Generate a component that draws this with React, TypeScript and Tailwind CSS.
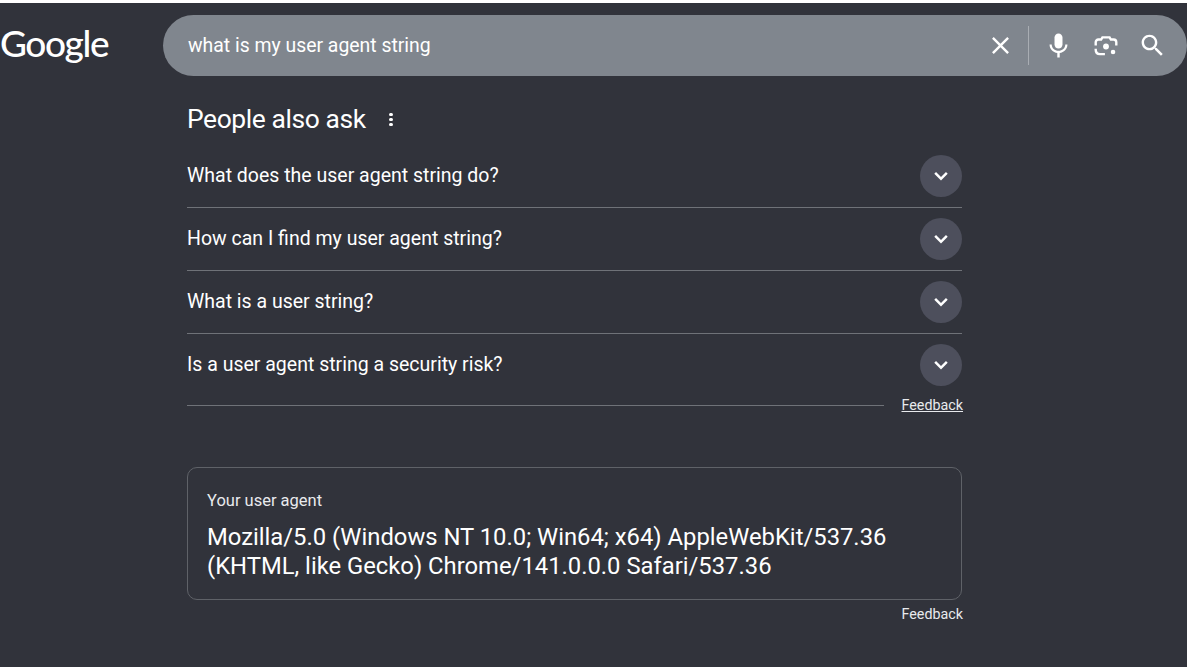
import React from "react";

const questions = [
  "What does the user agent string do?",
  "How can I find my user agent string?",
  "What is a user string?",
  "Is a user agent string a security risk?",
];

function CloseIcon() {
  return (
    <svg viewBox="0 0 24 24" className="w-[29px] h-[29px]" fill="white">
      <path d="M19 6.410 17.590 5 12 10.590 6.410 5 5 6.410 10.590 12 5 17.590 6.410 19 12 13.410 17.590 19 19 17.590 13.410 12z" />
    </svg>
  );
}

function MicIcon() {
  return (
    <svg viewBox="0 0 24 24" className="w-[29px] h-[29px]" fill="white">
      <path d="M12 14.500c1.900 0 3.300-1.500 3.300-3.400V5.400C15.300 3.500 13.900 2 12 2S8.700 3.500 8.700 5.400v5.700c0 1.900 1.400 3.400 3.300 3.400z" />
      <path d="M17.600 11.100c0 3.100-2.500 5.200-5.600 5.200s-5.600-2.100-5.600-5.200H4.600c0 3.700 2.900 6.600 6.400 7.100V22h2v-3.800c3.500-.5 6.400-3.400 6.400-7.100h-1.800z" />
    </svg>
  );
}

function LensIcon() {
  return (
    <svg viewBox="0 0 24 24" className="w-[26px] h-[26px]" fill="none" stroke="white" strokeWidth="2.2">
      <path d="M2.500 11.500V8.500C2.500 7 3.500 6 5 6h2.500l1.200-2h6.600l1.200 2H19c1.500 0 2.500 1 2.500 2.500v3" />
      <path d="M2.500 14.500v1C2.500 18 4 19.500 6.500 19.500H11" />
      <circle cx="12" cy="12.500" r="2.700" fill="white" stroke="none" />
      <circle cx="18.500" cy="17.500" r="2.100" fill="white" stroke="none" />
    </svg>
  );
}

function SearchIcon() {
  return (
    <svg viewBox="0 0 24 24" className="w-[29px] h-[29px]" fill="white">
      <path d="M15.500 14h-.79l-.28-.27C15.410 12.590 16 11.110 16 9.500 16 5.910 13.090 3 9.500 3S3 5.910 3 9.500 5.910 16 9.500 16c1.610 0 3.090-.59 4.230-1.570l.27.28v.79l5 4.990L20.490 19l-4.990-5zm-6 0C7.010 14 5 11.990 5 9.500S7.010 5 9.500 5 14 7.010 14 9.500 11.990 14 9.500 14z" />
    </svg>
  );
}

function ExpandIcon() {
  return (
    <svg viewBox="0 0 24 24" className="w-[26px] h-[26px]" fill="white">
      <path d="M16.590 8.300 12 12.880 7.410 8.300 5.800 9.900l6.200 6.200 6.200-6.200z" />
    </svg>
  );
}

export default function App() {
  return (
    <div className="w-[1187px] h-[667px] overflow-hidden bg-[#31333b] border-t-[3px] border-white font-['Roboto',sans-serif] text-white">
      {/* header */}
      <div className="flex items-center pt-3">
        <div className="w-[163px] pb-[6px] text-[37px] leading-[44px] tracking-[-1.4px] font-['Lato',sans-serif] font-medium">
          Google
        </div>
        <div className="flex-1 h-[61px] rounded-[31px] bg-[#80868e] flex items-center pl-[25px] pr-[20px]">
          <div className="flex-1 text-[19.4px]">what is my user agent string</div>
          <CloseIcon />
          <div className="w-px h-[39px] bg-[#a9adb3] ml-[13px] mr-[15px]" />
          <MicIcon />
          <div className="w-[20px]" />
          <LensIcon />
          <div className="w-[19px]" />
          <SearchIcon />
        </div>
      </div>

      {/* people also ask */}
      <div className="ml-[187px] w-[775px]">
        <div className="flex items-center h-[33px] mt-[27px] mb-[9px]">
          <span className="text-[26.4px] tracking-[-0.4px]">People also ask</span>
          <span className="ml-[23px] flex flex-col gap-[2px]">
            <span className="w-[4px] h-[3px] rounded-full bg-white" />
            <span className="w-[4px] h-[3px] rounded-full bg-white" />
            <span className="w-[4px] h-[3px] rounded-full bg-white" />
          </span>
        </div>
        {questions.map((q, i) => (
          <div
            key={q}
            className={`flex items-center justify-between h-[63px] text-[19.5px] ${
              i < questions.length - 1 ? "border-b border-[#6f7278]" : "pb-[1px]"
            }`}
          >
            <span>{q}</span>
            <div className="w-[42px] h-[42px] rounded-full bg-[#4d4f5c] flex items-center justify-center">
              <ExpandIcon />
            </div>
          </div>
        ))}
        <div className="flex items-center h-[18px] -mt-[1px]">
          <div className="flex-1 h-px bg-[#6f7278] mr-[17px]" />
          <a className="mt-[2px] -mr-[1px] text-[14.3px] underline text-[#e8eaed]">Feedback</a>
        </div>

        {/* user agent card */}
        <div className="mt-[53px] h-[133px] border border-[#5f6268] rounded-[10px] px-[19px] pt-[23px]">
          <div className="text-[16.5px] leading-[20px] text-[#e8eaed]">Your user agent</div>
          <div className="mt-[12px] text-[23.8px] leading-[29px]">
            Mozilla/5.0 (Windows NT 10.0; Win64; x64) AppleWebKit/537.36
            <br />
            (KHTML, like Gecko) Chrome/141.0.0.0 Safari/537.36
          </div>
        </div>
        <div className="flex justify-end mt-[4px] -mr-[1px]">
          <span className="text-[14.3px] text-[#e8eaed]">Feedback</span>
        </div>
      </div>
    </div>
  );
}
